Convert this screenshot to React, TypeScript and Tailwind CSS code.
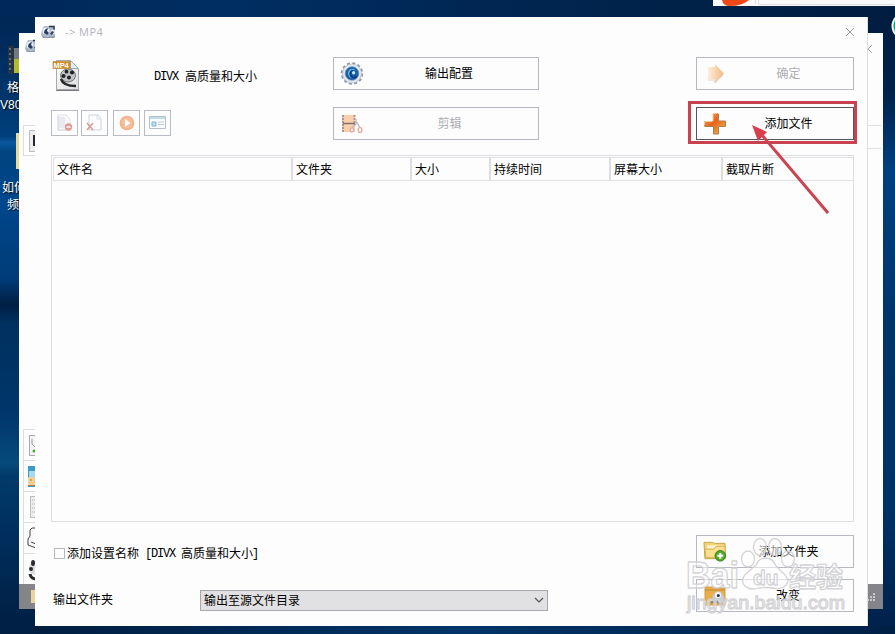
import React from "react";

const CJK = "font-['Liberation_Sans','Noto_Sans_CJK_SC',sans-serif]";

function Button({ label, icon, disabled, strong, shift = "" }: { label: string; icon: React.ReactNode; disabled?: boolean; strong?: boolean; shift?: string }) {
  return (
    <button className={`flex h-[33px] w-full items-center border bg-[#fdfdfd] pl-1.5 pr-[9px] text-[12px] ${strong ? "border-[#55555c]" : "border-[#b8b8c0]"} ${disabled ? "text-[#aeaeb2]" : "text-black"}`}>
      <span className="flex h-7 w-6 shrink-0 items-center justify-center">{icon}</span>
      <span className={`flex-1 text-center ${shift}`}>{label}</span>
    </button>
  );
}

function AppIcon() {
  return (
    <svg width="15" height="14" viewBox="0 0 15 14">
      <path d="M1 5 3 1h9l2 3v8l-3 1H2L0 10z" fill="#aeb9cb" />
      <path d="M1 9q2 4 6 3l6-1 1 2H2z" fill="#8997ad" />
      <circle cx="5" cy="6" r="3.5" fill="#e9eef5" />
      <path d="M3 8q0-4 4-5l-1 3 2 2-2 2z" fill="#263c62" />
      <circle cx="12" cy="7" r="2.4" fill="#e3e8ef" />
      <path d="m9 9 2-3 2 1-2 3z" fill="#34435b" />
      <path d="M8 1.5h5v3" stroke="#28364c" strokeWidth="1.5" fill="none" />
    </svg>
  );
}

function Mp4Icon() {
  return (
    <svg width="28" height="33" viewBox="0 0 28 33">
      <defs><linearGradient id="paper" y2="1"><stop stopColor="#fff" /><stop offset="1" stopColor="#dcdddf" /></linearGradient></defs>
      <path d="M4.500 1.500h14l8 8v21h-22z" fill="url(#paper)" stroke="#a9a9ac" />
      <path d="M4 31.500h23" stroke="#77787b" />
      <path d="M18.500 1.500v8h8z" fill="#e3edf4" stroke="#9cabb8" />
      <ellipse cx="16" cy="16.500" rx="7.500" ry="6.500" fill="#c2c4c6" stroke="#55585b" strokeWidth=".8" />
      <circle cx="11.500" cy="17" r="2.100" fill="#202326" />
      <circle cx="14.500" cy="12.700" r="1.900" fill="#202326" />
      <circle cx="20" cy="13.500" r="2.100" fill="#202326" />
      <circle cx="17" cy="18.500" r="2" fill="#202326" />
      <path d="M9 20q2 7 15 7" fill="none" stroke="#25282a" strokeWidth="2.600" />
      <path d="M1 2.500h17v7H1z" fill="#d58e2b" stroke="#b8792a" strokeWidth=".6" />
      <text x="1.500" y="8.800" fontSize="7.400" fontWeight="700" fontFamily="Liberation Sans" fill="#fff">MP4</text>
    </svg>
  );
}

function Gear() {
  return (
    <svg width="24" height="24" viewBox="0 0 24 24">
      <circle cx="12" cy="11.500" r="10.300" fill="none" stroke="#8d98a4" strokeWidth="1.900" strokeDasharray="3 2.390" />
      <circle cx="12" cy="11.500" r="9.500" fill="#e2e8ef" stroke="#a9b3bf" strokeWidth=".7" />
      <circle cx="12" cy="11.500" r="6.800" fill="#1a5ca5" stroke="#7296be" strokeWidth=".8" />
      <path d="M16 8.500a4.600 4.600 0 1 0 .5 5q-3 2-5 .2t0-4.400q2-2 5-.8" fill="#63b7ea" />
      <path d="M13 8.500a3.500 3.500 0 1 0 3.500 5.500" fill="none" stroke="#073774" strokeWidth="1.700" />
      <circle cx="13.600" cy="10.800" r="1.700" fill="#bce7fa" />
    </svg>
  );
}

function FilmCut() {
  return (
    <svg width="22" height="20" viewBox="0 0 22 20">
      <path d="M1 1h13v17H1z" fill="#facfae" />
      <path d="M2 1v17M13.500 1v10" stroke="#aa9890" strokeWidth="2" strokeDasharray="2 1" />
      <path d="M2 9.500h12" stroke="#80716e" strokeWidth="1.500" />
      <path d="M15 5v5l-4 4m5-6 3 6" fill="none" stroke="#c1b4b7" strokeWidth="1.300" />
      <ellipse cx="11" cy="16" rx="1.700" ry="2" fill="#fff8f5" stroke="#dfa49b" strokeWidth="1.200" />
      <ellipse cx="19" cy="16" rx="1.900" ry="2.500" fill="#fff8f5" stroke="#dfa49b" strokeWidth="1.200" />
    </svg>
  );
}

function Arrow() {
  return (
    <svg width="24" height="24" viewBox="0 0 24 24">
      <defs><linearGradient id="fade"><stop stopColor="#fff5e9" /><stop offset="1" stopColor="#f3b981" /></linearGradient></defs>
      <path d="M3 5h9V2l9 9.500-9 9.500v-4H3l2-2V7z" fill="url(#fade)" />
      <path d="M5 18h7v3l8-8" fill="none" stroke="#e1cfbf" />
    </svg>
  );
}

function Plus() {
  return (
    <svg width="24" height="24" viewBox="0 0 24 24">
      <defs><linearGradient id="orange" y2="1"><stop stopColor="#f7ad61" /><stop offset=".45" stopColor="#e6641d" /><stop offset="1" stopColor="#f4bd48" /></linearGradient></defs>
      <path d="M10 1h5v8h8v5h-8v8h-5v-8H1V9h9z" fill="url(#orange)" />
      <path d="M15.500 2v7h7v5.500h-7V22h-5v-7.500H1.500" stroke="#aa8056" fill="none" />
      <path d="M10 9V1.500h4M1.500 13V9.500h8" stroke="#f5c69a" fill="none" />
    </svg>
  );
}

function FolderAdd() {
  return (
    <svg width="25" height="23" viewBox="0 0 25 23">
      <path d="M1 2h9l2 1h11v16H2z" fill="#f5d477" stroke="#c6a546" />
      <path d="M4 5h17v4H4z" fill="#fff2cb" />
      <path d="M2 9h9l3-3h9v12H3z" fill="#fbe08e" stroke="#cfac4e" />
      <circle cx="18" cy="16" r="5.500" fill="#55ab2d" stroke="#347c24" />
      <path d="M18 13v6M15 16h6" stroke="#fff" strokeWidth="2" />
    </svg>
  );
}

function ChangeFolder() {
  return (
    <svg width="22" height="20" viewBox="0 0 22 20">
      <path d="M1 1h9l1 1h10v17H1z" fill="#e9ad49" stroke="#d59736" />
      <path d="M1 4h20" stroke="#bd8840" />
      <path d="m8 16 1-7 4-4 4 1 3 5v6z" fill="#c9ced5" />
      <circle cx="14" cy="9" r="3" fill="#f5f7fa" />
      <circle cx="14.300" cy="9.500" r="1.500" fill="#26384e" />
      <path d="M7 17q4-4 10 1" fill="none" stroke="#747d8a" strokeWidth="2" />
    </svg>
  );
}

function ToolIcon({ kind }: { kind: number }) {
  if (kind === 2) return <svg width="16" height="16" viewBox="0 0 16 16"><circle cx="8" cy="8" r="7.3" fill="#efb08c" /><circle cx="8" cy="8" r="5.6" fill="#f6c098" /><path d="M6 4v8l5.500-4z" fill="#fff" /></svg>;
  if (kind === 3) return <svg width="17" height="14" viewBox="0 0 17 14"><path d="M.5.5h16v12H.5z" fill="#fafcff" stroke="#b5bec9" /><path d="M1 2h15" stroke="#bfdcec" strokeWidth="2" /><path d="M3 6h4v4H3z" fill="#c6def3" stroke="#83afd4" /><path d="M9 6h6M9 8.500h6" stroke="#c5c8ce" /></svg>;
  return (
    <svg width="17" height="18" viewBox="0 0 17 18">
      {kind === 0 ? (
        <><path d="M2 1h8l4 4v11H2z" fill="#f8f8fb" stroke="#e1e2e8" /><path d="M2 2v14h8M4 3v11M6 3v11M8 3v11" fill="none" stroke="#d8dae3" /><circle cx="12.500" cy="13" r="3.700" fill="#df9d96" /><path d="M10.500 13h4" stroke="#fff" strokeWidth="1.500" /></>
      ) : (
        <><path d="M3 1h9l3 4v11H3z" fill="#fcfcfd" stroke="#cdd4dc" /><path d="M11 1v4h4" fill="none" stroke="#d5dce4" /><path d="m1 9 6 7m0-7-6 7" stroke="#d29d94" strokeWidth="1.500" /></>
      )}
    </svg>
  );
}

function SideIcon({ kind }: { kind: number }) {
  return (
    <svg width="12" height="28" viewBox="0 0 12 28" className="h-7 w-3 shrink-0">
      {kind === 0 && <><path d="M5.500 4.500h8v20h-8z" fill="#f3f3f3" stroke="#aaa" /><path d="M8 8v5l3 3" fill="none" stroke="#999" /><circle cx="10" cy="20" r="1.500" fill="#43a43b" /></>}
      {kind === 1 && <><path d="M4 4h9v21H4z" fill="#3c9bc7" /><path d="M5 9h8v6H5z" fill="#a6dbed" /><path d="M4 15h9v9H4z" fill="#efd096" /><path d="M4 23.500h9M6 18h2" stroke="#b57e37" /></>}
      {kind === 2 && <><path d="M6.500 3.500h8v21h-8z" fill="#eee" stroke="#bbb" /><path d="M8 7h4M8 11h4M8 15h4M8 19h4" stroke="#aaa" strokeDasharray="1 1" /></>}
      {kind === 3 && <path d="M13 4H8L6 6v6l-2 3v6l8 3v-4l-5-2" fill="#f7f7f7" stroke="#414347" />}
      {kind === 4 && <><circle cx="12" cy="13" r="7" fill="#d8dadd" /><ellipse cx="9" cy="8" rx="2" ry="3" fill="#292d31" /><circle cx="7" cy="14" r="2" fill="#292d31" /><path d="M6 19q1 5 7 5" stroke="#292d31" strokeWidth="3" fill="none" /></>}
    </svg>
  );
}

function Desktop() {
  return (
    <div className="absolute inset-0 bg-[linear-gradient(180deg,#00254f_0%,#002c5d_8%,#00386f_17%,#003f7d_21.5%,#0b589b_22.5%,#00437f_24%,#00478c_32%,#003c78_44%,#001f43_48%,#00305f_51%,#00366b_65%,#064a7b_73%,#003b6b_75%,#002f5d_84%,#002248_96%,#001f43_100%)]">
      <div className="absolute inset-x-0 top-0 h-[17px] bg-[linear-gradient(90deg,#002858,#002e63_25%,#00254f_60%,#001d40)]" />
      <div className="absolute right-0 top-[17px] h-[617px] w-[27px] bg-[linear-gradient(180deg,#001d40,#00234a_12%,#004080_25%,#00356b_50%,#003264_80%,#00204a)]" />
      <div className="absolute bottom-0 right-0 h-2 w-[860px] bg-linear-to-r from-[#001e40] via-[#003468] to-[#001f45]" />
      <svg className="absolute left-2 top-[45px]" width="13" height="30" viewBox="0 0 13 30">
        <path d="M0 1h6v28H0z" fill="#253343" /><path d="M2 3v25" stroke="#607184" strokeWidth="2" strokeDasharray="2 3" /><path d="M6 3h7v25H6z" fill="#aebb2f" /><path d="M6 3h7v11H6z" fill="#74777e" />
      </svg>
      <div className="absolute left-0 top-[80px] w-5 overflow-hidden whitespace-nowrap text-[12px] leading-[17px] text-white [text-shadow:1px_1px_1px_black]"><div className="pl-[7px]">格式</div><div>V80</div></div>
      <div className="absolute left-4 top-[133px] h-9 w-1 bg-[#ead998]" />
      <div className="absolute left-[2px] top-[180px] w-[18px] overflow-hidden whitespace-nowrap text-[12px] leading-[17px] text-white [text-shadow:1px_1px_1px_black]"><div>如何</div><div className="pl-[5px]">频</div></div>
      <svg className="absolute left-[713px] top-0" width="182" height="6" viewBox="0 0 182 6"><path d="M0 0h182v6H0z" fill="#fafafa" /><path d="M9 0q1 6 8 6 12 0 19-6" fill="#ef4818" /><path d="M42.500 0v4M45.500 0v4.500h136" stroke="#ddd" fill="none" /></svg>
      <svg className="absolute right-0 top-[13px]" width="4" height="26" viewBox="0 0 4 26"><circle cx="14" cy="13" r="12.500" fill="#23966b" stroke="#e9f7f3" strokeWidth="2" /></svg>
    </div>
  );
}

function BackWindow() {
  return (
    <div className="absolute left-[19px] top-[33px] flex h-[576px] w-[864px] flex-col bg-[#fdfdfd]">
      <div className="flex h-[92px] justify-between pl-[6px] pt-[6px]"><AppIcon /><svg className="mr-[9px] mt-1" width="12" height="12" viewBox="0 0 12 12"><path d="m2 2 8 8m0-8-8 8" stroke="#aaa" /></svg></div>
      <div className="flex h-[31px] justify-between">
        <div className="ml-1 flex w-[13px] items-center border border-[#ddd] bg-white pl-[5px]"><svg width="8" height="22" viewBox="0 0 8 22" className="shrink-0"><path d="M.5.5h8v21h-8z" fill="#eee" stroke="#bbb" /><path d="M4 5h4v2H6v9H4z" fill="#25282c" /></svg></div>
        <div className="mb-[7px] mr-[2px] w-4 border-y border-[#e0e0e3]" />
      </div>
      <div className="h-[273px]" />
      <div className="flex flex-1 flex-col">
        {[0, 1, 2, 3, 4].map((n) => <div key={n} className="ml-1 flex h-[31px] w-[13px] items-center overflow-hidden border-l border-t border-[#ddd]"><SideIcon kind={n} /></div>)}
      </div>
      <div className="flex h-[25px] shrink-0 items-center justify-between bg-[#858589] pl-[12px] pr-[7px]">
        <span className="h-[13px] w-3 bg-[#e9d69d]" />
        <svg width="9" height="10" viewBox="0 0 9 10"><path d="M6 1h2v2H6zM3 4h2v2H3zM6 4h2v2H6zM0 7h2v2H0zM3 7h2v2H3zM6 7h2v2H6z" fill="#c8c8cb" /></svg>
      </div>
    </div>
  );
}

const columns = [
  ["文件名", "w-[239px]"], ["文件夹", "w-[119px]"], ["大小", "w-[79px]"], ["持续时间", "w-[120px]"], ["屏幕大小", "w-[112px]"], ["截取片断", "flex-1"],
];

function Dialog() {
  return (
    <div className="absolute left-[35px] top-[17px] flex h-[609px] w-[833px] flex-col border-r border-[#dedee2] bg-[#fdfdfd]">
      <header className="flex h-[30px] shrink-0 items-center pl-[6px] pr-[11px]">
        <AppIcon /><span className="flex-1 pl-[9px] font-['Open_Sans',sans-serif] text-[11px] tracking-[0.45px] text-[#b4b4b8]">-&gt; MP4</span>
        <svg width="12" height="12" viewBox="0 0 12 12"><path d="m2 2 8 8m0-8-8 8" stroke="#999" /></svg>
      </header>
      <main className="flex flex-1 flex-col px-4 pr-[13px] pt-[10px] text-[12px] leading-4">
        <section className="flex h-[98px]">
          <div className="flex w-[282px] flex-col">
            <div className="flex h-[50px] items-start"><span className="w-[103px] pl-px pt-[2px]"><Mp4Icon /></span><span className="flex items-center gap-[7px] pt-[12px]"><span className="font-['Liberation_Mono',monospace] tracking-[-1.2px]">DIVX</span>高质量和大小</span></div>
            <div className="flex pt-[3px]">
              {[0, 1, 2, 3].map((n) => <button key={n} className={`flex h-[26px] w-[27px] items-center justify-center border border-[#b9bcc3] ${n === 1 ? "mr-[5px]" : n === 3 ? "" : n === 0 ? "mr-[3px]" : "mr-1"}`}><ToolIcon kind={n} /></button>)}
            </div>
          </div>
          <div className="flex w-[206px] flex-col gap-[17px]"><Button label="输出配置" icon={<Gear />} shift="pl-[5px]" /><Button label="剪辑" icon={<FilmCut />} disabled shift="pl-[6px]" /></div>
          <div className="ml-auto flex w-[158px] flex-col gap-[17px]"><Button label="确定" icon={<Arrow />} disabled shift="pl-[6px]" /><Button label="添加文件" icon={<Plus />} strong shift="pl-[6px]" /></div>
        </section>
        <section className="flex h-[367px] w-[803px] flex-col border border-[#dedee2] pl-px pt-px">
          <div className="flex h-[24px] border-b border-l border-t border-[#dfdfe4]">
            {columns.map(([name, width], n) => <div key={name} className={`flex items-center pl-[3px] pt-[2px] ${width} ${n < 5 ? "border-r-2 border-[#dcdce1]" : ""}`}>{name}</div>)}
          </div>
        </section>
        <section className="flex h-[91px] pt-[13px]">
          <div className="flex flex-1 flex-col">
            <label className="flex h-9 items-center pl-[3px] pt-px"><span className="mr-[2px] size-[11px] border border-[#b8b8bf]" />添加设置名称<span className="ml-[6px] font-['Liberation_Mono',monospace] tracking-[-1.2px]">[DIVX</span><span className="ml-[6px]">高质量和大小</span><span className="-ml-px font-['Liberation_Mono',monospace]">]</span></label>
            <div className="flex pt-[19px]"><span className="w-[149px] pl-[2px] pt-[2px]">输出文件夹</span><div className="flex h-[21px] w-[348px] items-center justify-between border border-[#a7a7ac] bg-[#e1e0e3] pl-[3px] pr-[3px]"><span className="pt-px">输出至源文件目录</span><svg width="10" height="7" viewBox="0 0 10 7"><path d="m1 1 4 4 4-4" fill="none" stroke="#555" strokeWidth="1.200" /></svg></div></div>
          </div>
          <div className="flex w-[158px] flex-col gap-[11px]"><Button label="添加文件夹" icon={<FolderAdd />} shift="pl-[6px]" /><Button label="改变" icon={<ChangeFolder />} shift="pl-[5px]" /></div>
        </section>
      </main>
    </div>
  );
}

function Overlays() {
  return (
    <>
      <div className="absolute left-[688px] top-[101px] h-[43px] w-[169px] border-[3px] border-[#c9424f]" />
      <svg className="absolute left-[748px] top-[122px]" width="84" height="95" viewBox="0 0 84 95"><path d="m13 12 67 79" stroke="#c94551" strokeWidth="3" /><path d="m4 3 15 7-9 9z" fill="#d93f4d" /></svg>
      <svg className="absolute left-[684px] top-[534px]" width="170" height="82" viewBox="0 0 170 82">
        <g fill="#fff" fillOpacity=".55" stroke="#cfcfd2" strokeOpacity=".9" strokeWidth="1.300" strokeLinejoin="round">
          <text x="2" y="54" fontFamily="Liberation Sans" fontWeight="700" fontSize="36" textLength="53" lengthAdjust="spacingAndGlyphs">Bai</text>
          <ellipse cx="64" cy="25" rx="6.500" ry="8" /><ellipse cx="76" cy="13" rx="6.500" ry="8.500" /><ellipse cx="91" cy="13" rx="6.500" ry="8.500" /><ellipse cx="104" cy="25" rx="6.500" ry="8" />
          <path d="M82 24q7 0 10 8l9 9q5 5 1 10-5 5-13 3-7-1-14 0-9 3-15-3-4-6 3-12l9-8q3-7 10-7" />
          <text x="69" y="51" fontFamily="Liberation Sans" fontWeight="700" fontSize="21">du</text>
          <text x="105" y="53" fontFamily="Noto Sans CJK SC" fontWeight="700" fontSize="27">经验</text>
          <text x="3" y="75" fontFamily="Liberation Sans" fontSize="19" textLength="158" lengthAdjust="spacingAndGlyphs">jingyan.baidu.com</text>
        </g>
      </svg>
    </>
  );
}

export default function App() {
  return <div className={`relative h-[634px] w-[895px] overflow-hidden ${CJK}`}><Desktop /><BackWindow /><Dialog /><Overlays /></div>;
}
